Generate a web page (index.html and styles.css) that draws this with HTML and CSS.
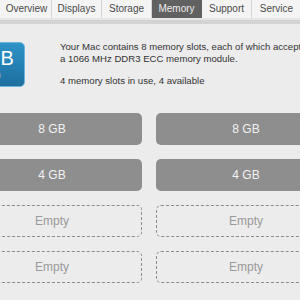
FILE: index.html
```html
<!DOCTYPE html>
<html lang="en">
  <head>
    <meta charset="UTF-8" />
    <meta name="viewport" content="width=device-width, initial-scale=1.0" />
    <title>Memory</title>
    <link rel="stylesheet" href="styles.css">
  </head>
  <body>
    <!-- Tab bar -->
    <div class="tabs">
      <div class="tab">Overview</div>
      <div class="tab">Displays</div>
      <div class="tab">Storage</div>
      <div class="tab active">Memory</div>
      <div class="tab">Support</div>
      <div class="tab">Service</div>
    </div>
    <div class="tabs-rule"></div>

    <!-- Summary -->
    <div class="summary">
      <div class="badge">
        <span class="badge-size">16 GB</span>
        <span class="badge-label">Installed</span>
      </div>
      <div class="info">
        <p>Your Mac contains 8 memory slots, each of which accepts<br />a 1066 MHz DDR3 ECC memory module.</p>
        <p>4 memory slots in use, 4 available</p>
      </div>
    </div>

    <!-- Slots -->
    <div class="slots">
      <div class="slot">8 GB</div>
      <div class="slot">8 GB</div>
      <div class="slot">4 GB</div>
      <div class="slot">4 GB</div>
      <div class="slot empty">Empty</div>
      <div class="slot empty">Empty</div>
      <div class="slot empty">Empty</div>
      <div class="slot empty">Empty</div>
    </div>
  </body>
</html>
```

FILE: styles.css
```css
body {
  font-family: "Liberation Sans", Arial, sans-serif;
  margin: 0;
  padding: 0;
  width: 300px;
  height: 300px;
  overflow: hidden;
  background: #ececec;
}

.tabs {
  display: flex;
  height: 18px;
  padding-left: 2px;
  background: #f4f4f4;
  border-bottom: 2px solid #e6e6e6;
}

.tab {
  flex: 0 0 50px;
  box-sizing: border-box;
  border-right: 1px solid #d4d4d4;
  font-size: 10px;
  line-height: 18px;
  text-align: center;
  color: #4a4a4a;
  white-space: nowrap;
}

.tab.active {
  background: #616161;
  color: #ececec;
  border-right-color: #616161;
}

.tabs-rule {
  height: 4px;
  background: #d3d3d3;
}

.summary {
  display: flex;
  align-items: flex-start;
  gap: 35px;
  margin-top: 17px;
  margin-left: -45px;
}

.badge {
  flex: 0 0 70px;
  height: 45px;
  box-sizing: border-box;
  border: 1px solid #6db4dc;
  border-radius: 5px;
  background: linear-gradient(180deg, #2f93c6, #1c6f9f);
  color: #fff;
  display: flex;
  flex-direction: column;
  align-items: center;
  justify-content: center;
  margin-top: 1px;
  padding-right: 9px;
  white-space: nowrap;
}

.badge-size {
  font-size: 20px;
  line-height: 22px;
}

.badge-label {
  font-size: 8px;
  line-height: 12px;
  padding-top: 1px;
}

.info {
  white-space: nowrap;
  font-size: 9.6px;
  line-height: 12px;
  color: #333;
}

.info p {
  margin: 0 0 10px;
}

.slots {
  display: grid;
  grid-template-columns: 180px 180px;
  column-gap: 14px;
  row-gap: 14px;
  margin-top: 16px;
  margin-left: -38px;
}

.slot {
  height: 32px;
  box-sizing: border-box;
  border-radius: 5px;
  background: #8e8e8e;
  color: #f2f2f2;
  font-size: 12px;
  line-height: 32px;
  text-align: center;
}

.slot.empty {
  background: transparent;
  border: 1px dashed #8c8c8c;
  line-height: 30px;
  color: #999;
}
```
